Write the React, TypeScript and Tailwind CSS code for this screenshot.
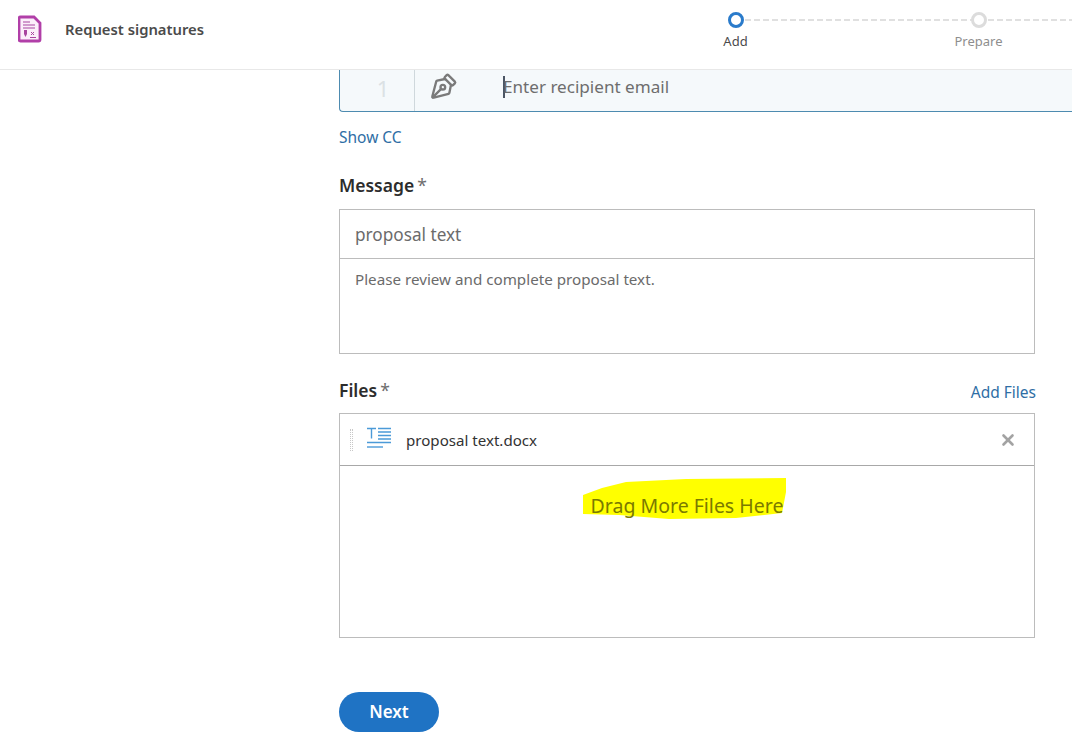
import React from 'react'
import { PenTool, X } from 'lucide-react'

const font = "font-['Noto_Sans','Open_Sans',sans-serif]"

function DocIcon() {
  return (
    <svg width="24" height="28" viewBox="0 0 24 28" fill="none">
      <path d="M2.500 2h13.500l6 6v16.500a1.500 1.500 0 0 1-1.500 1.500h-18a1.500 1.500 0 0 1-1.500-1.500v-21a1.500 1.500 0 0 1 1.500-1.500z" fill="#fbeefa" stroke="#b13fa8" strokeWidth="2.800" />
      <path d="M5 7h7M5 10h12M5 13h12" stroke="#a8459f" strokeWidth="1.200" />
      <path d="M6 15h3v4l-1.500 3-1.500-3z" fill="#a8459f" />
      <path d="M13 17l3 3M16 17l-3 3M12 22.500h6" stroke="#a8459f" strokeWidth="1" />
    </svg>
  )
}

function TextFileIcon() {
  return (
    <svg width="26" height="24" viewBox="0 0 26 24" fill="none" stroke="#4b9ad8" strokeWidth="1.400">
      <path d="M1 2.500h9M5.500 2.500v10M12 2.500h13M12 6h13M12 9.500h13M12 13h13M1 16.500h24" />
      <path d="M1 21h16" />
    </svg>
  )
}

function Step({ label, active }: { label: string; active?: boolean }) {
  return (
    <div className="relative flex w-[243px] shrink-0 flex-col items-center pt-3">
      <svg className="absolute left-1/2 top-[19px]" width="243" height="2">
        <line x1="0" y1="1" x2="243" y2="1" stroke="#d6d6d6" strokeWidth="1.300" strokeDasharray="6 3" />
      </svg>
      <div className={`relative h-4 w-4 rounded-full border-[3px] bg-white ${active ? 'border-[#2a7bcb]' : 'border-[#dcdcdc]'}`} />
      <span className={`mt-1 text-[13px] leading-[18px] ${active ? 'text-[#4b4b4b]' : 'text-[#8e8e8e]'}`}>{label}</span>
    </div>
  )
}

export default function App() {
  return (
    <div className={`${font} h-[755px] w-[1072px] overflow-hidden bg-white`}>
      <header className="flex h-[70px] items-start border-b border-[#e8e8e8]">
        <div className="ml-[18px] mt-[15px]">
          <DocIcon />
        </div>
        <h1 className="ml-[23px] mt-[18px] text-[14.800px] font-semibold leading-[22px] text-[#4b4b4b]">Request signatures</h1>
        <div className="ml-auto flex w-[458px] overflow-hidden">
          <Step label="Add" active />
          <Step label="Prepare" />
        </div>
      </header>

      <main className="pl-[339px]">
        <div className="flex h-[42px] w-[800px] items-center rounded-bl-sm border-b border-l border-[#4d8bb0] bg-[#f5f9fb]">
          <div className="flex h-full w-[75px] items-center justify-center border-r border-[#cfd8dc] pb-[4px] pl-3 text-[22px] text-[#dbe1e4]">1</div>
          <PenTool className="-mt-[9px] ml-[15px] h-[28px] w-[28px] -rotate-90 text-[#7a7a7a]" strokeWidth={2} />
          <div className="-mt-2 ml-[45px] h-[22px] w-[2px] bg-[#4b5563]" />
          <span className="-mt-2 -ml-[2px] text-[17.100px] text-[#6e6e6e]">Enter recipient email</span>
        </div>

        <a className="mt-[13px] block text-[15.500px] leading-[24px] text-[#2f6ea5]">Show CC</a>

        <div className="mt-[24px] text-[17.500px] font-semibold leading-[24px] text-[#2c2c2c]">
          Message<span className="ml-[3px] font-normal text-[#6e6e6e]">*</span>
        </div>
        <div className="mt-[12px] w-[696px] border border-[#bcbcbc]">
          <div className="flex h-[49px] items-center border-b border-[#bcbcbc] px-[15px] pt-[1px] text-[17.200px] text-[#6b6b6b]">proposal text</div>
          <div className="h-[94px] px-[15px] pt-[9px] text-[15.200px] leading-[22px] text-[#6b6b6b]">Please review and complete proposal text.</div>
        </div>

        <div className="mt-[24px] flex w-[697px] items-end justify-between">
          <div className="text-[17.500px] font-semibold leading-[24px] text-[#2c2c2c]">
            Files<span className="ml-[3px] font-normal text-[#6e6e6e]">*</span>
          </div>
          <a className="translate-y-[2px] text-[15.500px] leading-[24px] text-[#2f6ea5]">Add Files</a>
        </div>
        <div className="mt-[11px] w-[696px] border border-[#bcbcbc]">
          <div className="flex h-[52px] items-center border-b border-[#a8a8a8]">
            <div className="ml-[10px] h-[22px] w-[3px] border-x border-dotted border-[#c8c8c8]" />
            <div className="mb-[3px] ml-[13px]">
              <TextFileIcon />
            </div>
            <span className="ml-[14px] mt-[1px] text-[15.100px] text-[#333333]">proposal text.docx</span>
            <X className="ml-auto mr-[17px] h-[18px] w-[18px] text-[#a3a3a3]" strokeWidth={3.500} />
          </div>
          <div className="relative flex h-[171px] justify-center pt-[27px]">
            <svg className="absolute left-[243px] top-[12px]" width="206" height="44" viewBox="584 478 206 44">
              <path d="M584 514L584 495L603 488L627 482L687 479L787 478L787 492L783 513L737 518L670 519L620 515z" fill="#ffff00" />
            </svg>
            <span className="relative text-[19.500px] leading-[26px] text-[#7a7a00]">Drag More Files Here</span>
          </div>
        </div>

        <button className="mt-[54px] h-[40px] w-[100px] rounded-full bg-[#1f73c4] text-[17px] font-semibold text-white">Next</button>
      </main>
    </div>
  )
}
